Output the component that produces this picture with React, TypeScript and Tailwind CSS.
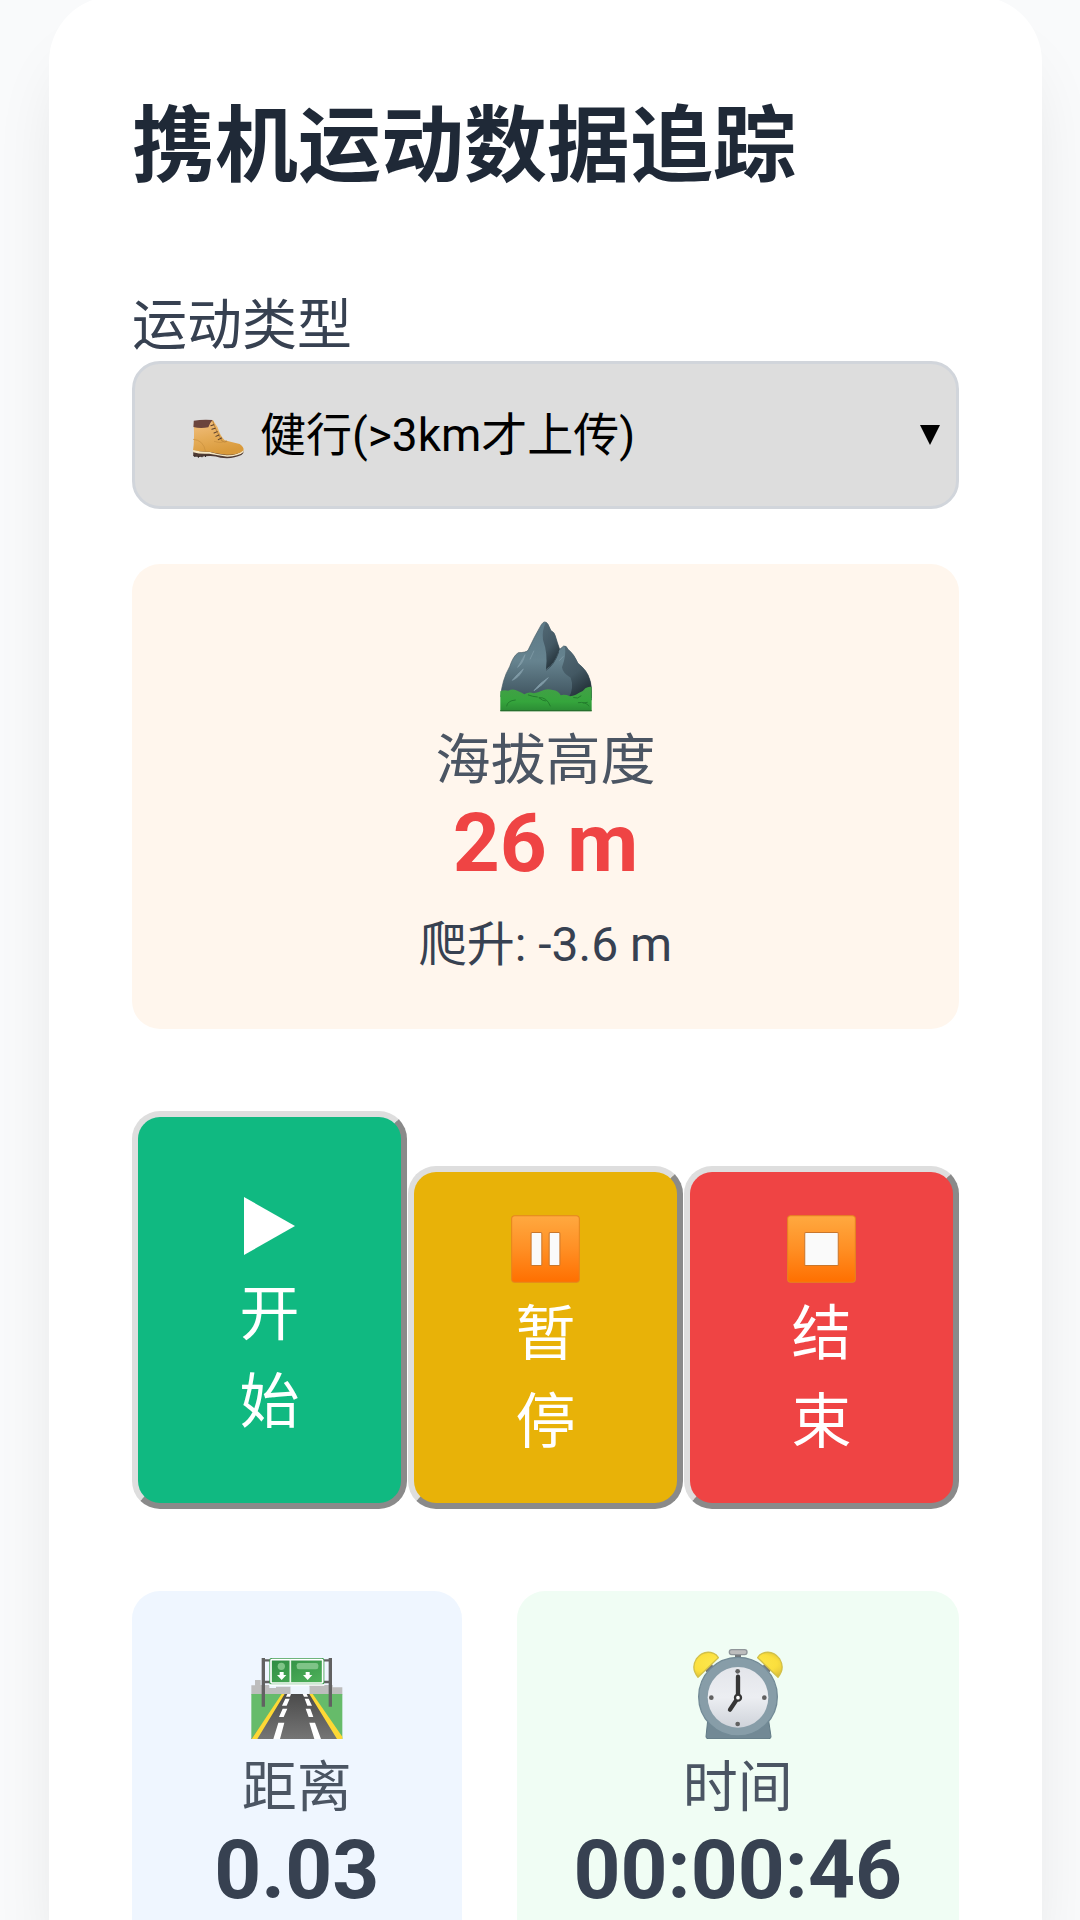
import { useState, type ReactNode } from 'react';

function Boot() {
  return (
    <svg viewBox="204 243 149 120" preserveAspectRatio="none" className="h-10 w-[53px]" aria-hidden="true">
      <defs>
        <linearGradient id="boot-leather" x1="0" y1="0" x2="0.3" y2="1">
          <stop offset="0" stopColor="#f3c184" />
          <stop offset="0.55" stopColor="#e5ac58" />
          <stop offset="1" stopColor="#d99a3b" />
        </linearGradient>
      </defs>
      <path d="M207 338 Q208 350 207 354 Q222 360 240 355 Q268 352 284 359 Q318 364 343 351 Q351 345 349 337 Z" fill="#4e3a34" />
      <path d="M207 335 Q228 342 252 341 Q276 349 302 352 Q335 352 350 333 L349 342 Q335 355 303 356 Q276 352 252 347 Q228 349 207 343 Z" fill="#f6e7c4" />
      <path d="M209 260 L262 246 Q268 254 276 268 Q283 294 296 307 Q320 314 338 318 Q350 326 349 337 Q332 353 300 350 Q274 347 252 341 Q228 342 207 336 Q211 310 209 260 Z" fill="url(#boot-leather)" />
      <path d="M209 248 Q232 244 262 246 Q254 254 250 268 Q226 272 208 267 Z" fill="#6b443c" />
      <path d="M262 248 Q270 276 288 308 Q294 315 302 309" fill="none" stroke="#c08a3e" strokeWidth="3" />
      <path d="M207 304 Q236 306 242 340 M266 310 Q280 315 290 313" fill="none" stroke="#c88f3d" strokeWidth="2" />
      <g stroke="#5b4030" strokeWidth="3" strokeLinecap="round">
        <path d="M257 263l8-3M260 274l9-3M266 285l9-4M271 295l9-4M278 305l9-5" />
      </g>
      <path d="M212 357v-5M222 359v-5M232 358v-5M242 357v-5" stroke="#2f2624" strokeWidth="3" />
    </svg>
  );
}

function Mountain() {
  return (
    <svg viewBox="300 54 276 282" className="h-[94px] w-[92px]" aria-hidden="true">
      <defs>
        <linearGradient id="rock" x1="0" y1="0" x2="0" y2="1">
          <stop offset="0" stopColor="#5d7a87" />
          <stop offset="0.5" stopColor="#66838f" />
          <stop offset="1" stopColor="#3d515c" />
        </linearGradient>
        <linearGradient id="rock-shade" x1="0" y1="0" x2="0.4" y2="1">
          <stop offset="0" stopColor="#536a76" />
          <stop offset="0.6" stopColor="#435863" />
          <stop offset="1" stopColor="#26343c" />
        </linearGradient>
        <linearGradient id="bush" x1="0" y1="0" x2="0" y2="1">
          <stop offset="0" stopColor="#43a047" />
          <stop offset="0.6" stopColor="#35a53c" />
          <stop offset="1" stopColor="#2b8a34" />
        </linearGradient>
      </defs>
      <path d="M302 290 Q306 240 329 200 Q340 167 355 158 Q378 158 384 151 Q403 110 424 74 Q434 58 444 73 L453 92 Q464 97 466 108 Q472 128 479 148 L491 138 Q499 136 504 148 Q522 162 534 190 Q562 212 569 238 Q575 252 575 300 Z" fill="url(#rock)" stroke="#465a63" strokeWidth="2" />
      <path d="M438 66 Q425 91 429 120 Q444 160 438 208 Q464 192 476 155 L479 148 Q472 128 466 108 Q464 97 453 92 L444 73 Z" fill="url(#rock-shade)" />
      <path d="M494 138 Q500 165 486 202 Q488 220 512 233 Q523 262 506 294 L575 294 Q576 255 569 238 Q562 212 534 190 Q522 162 504 148 Q499 137 494 138 Z" fill="url(#rock-shade)" />
      <path d="M476 156 Q462 196 438 211" fill="none" stroke="#3c505a" strokeWidth="3" />
      <path d="M375 164 Q369 190 353 202 Q360 190 375 164 Z M402 152 L390 178 M370 207 Q358 232 337 241 Q350 224 370 207 Z M445 233 Q430 254 402 272 Q420 248 445 233 Z M490 169 L478 182" fill="#7f9aa6" stroke="#7f9aa6" strokeWidth="2.5" strokeLinejoin="round" />
      <path d="M301 334 V274 Q312 268 325 272 Q340 264 355 274 Q366 279 373 283 Q387 274 401 280 Q416 277 424 273 Q440 264 458 270 Q476 272 482 286 Q494 282 510 289 Q528 286 536 279 Q550 275 556 265 Q565 259 575 261 V334 Z" fill="url(#bush)" />
      <path d="M301 332 H575" stroke="#27692d" strokeWidth="3" />
      <path d="M320 318 Q322 302 346 300 M385 285 Q398 290 412 291 M417 293 Q440 290 451 318 M418 294 Q428 303 437 303 M521 293 Q534 298 543 288 M535 308 Q556 304 567 318 M550 309 L562 307" fill="none" stroke="#237d2d" strokeWidth="3" strokeLinecap="round" />
    </svg>
  );
}

function Motorway() {
  return (
    <svg viewBox="395 225 276 282" className="h-[94px] w-[92px]" aria-hidden="true">
      <defs>
        <linearGradient id="asphalt" x1="0" y1="0" x2="0" y2="1">
          <stop offset="0" stopColor="#4b4b4b" />
          <stop offset="1" stopColor="#757575" />
        </linearGradient>
        <linearGradient id="sign" x1="0" y1="0" x2="1" y2="1">
          <stop offset="0" stopColor="#2e8b41" />
          <stop offset="1" stopColor="#4fb25b" />
        </linearGradient>
      </defs>
      <path d="M396 374 V346 H407 V330 H424 V345 H450 V354 H470 V350 H514 V374 Z M570 374 V345 H640 V352 H669 V374 Z" fill="#bdbdbd" />
      <path d="M396 372 H669 V507 H396 Z" fill="#66bb6a" />
      <path d="M514 350 H570 V374 H514 Z" fill="#eef5fd" />
      <path d="M492 372 H574 L669 507 H396 Z" fill="url(#asphalt)" />
      <path d="M487 372 H496 L414 507 H397 Z M570 372 H580 L669 500 V507 H653 Z" fill="#fdd835" />
      <g fill="#fff">
        <path d="M504 372h11l-3 8h-12zM498 386h13l-9 21h-14zM490 416h14l-11 25h-14zM477 458h18l-13 49h-20z" />
        <path d="M550 372h12l4 8h-12zM556 386h12l10 21h-14zM559 416h14l9 25h-14zM570 458h17l18 49h-20z" />
      </g>
      <path d="M432 264 V410 M633 264 V410" stroke="#616161" strokeWidth="10" />
      <path d="M436 271 H454 M436 336 H454 M611 271 H629 M611 336 H629" stroke="#616161" strokeWidth="7" />
      <rect x="450" y="264" width="165" height="80" rx="6" fill="#3f9c50" />
      <rect x="455" y="269" width="155" height="70" rx="3" fill="url(#sign)" stroke="#fff" strokeWidth="5" />
      <path d="M513 269 V339" stroke="#e8f5e9" strokeWidth="5" />
      <circle cx="486" cy="289" r="11" fill="#7fc487" />
      <rect x="532" y="279" width="65" height="19" rx="7" fill="#7fc487" />
      <path d="M481 306h12v9h8l-14 15l-14-15h8zM559 306h12v9h8l-14 15l-14-15h8z" fill="#fff" />
      <path d="M450 345 H615" stroke="#fff" strokeWidth="4" />
    </svg>
  );
}

function AlarmClock() {
  return (
    <svg viewBox="577 225 276 282" className="h-[94px] w-[92px]" aria-hidden="true">
      <defs>
        <linearGradient id="dial" x1="0" y1="0" x2="0" y2="1">
          <stop offset="0" stopColor="#e3e5ea" />
          <stop offset="0.5" stopColor="#eceef2" />
          <stop offset="1" stopColor="#cfd3da" />
        </linearGradient>
        <radialGradient id="bell" cx="0.45" cy="0.45" r="0.7">
          <stop offset="0" stopColor="#ffee58" />
          <stop offset="0.7" stopColor="#fbdf3d" />
          <stop offset="1" stopColor="#d9be3a" />
        </radialGradient>
      </defs>
      <path d="M617 301 L640 288 M813 301 L790 288" stroke="#757575" strokeWidth="13" />
      <path d="M624 452 L619 500 Q619 506 625 506 H808 Q814 506 814 500 L807 452 Z" fill="#728995" stroke="#607985" strokeWidth="3" />
      <rect x="706" y="248" width="18" height="24" fill="#707579" />
      <rect x="689" y="239" width="53" height="15" rx="7" fill="#bdbdbd" stroke="#8f9599" strokeWidth="4" />
      <circle cx="715" cy="380" r="118" fill="#879da8" stroke="#728a96" strokeWidth="4" />
      <circle cx="715" cy="382" r="91" fill="url(#dial)" />
      <path d="M595 322 Q573 295 590 267 Q611 239 642 250 Q651 253 656 263 Z M835 322 Q857 295 840 267 Q819 239 788 250 Q779 253 774 263 Z" fill="url(#bell)" stroke="#d2c04a" strokeWidth="4" strokeLinejoin="round" />
      <g fill="#616161">
        <circle cx="714" cy="304" r="7" />
        <circle cx="635" cy="383" r="7" />
        <circle cx="794" cy="383" r="7" />
        <circle cx="714" cy="462" r="7" />
      </g>
      <path d="M715 320 V383 L691 419" fill="none" stroke="#363636" strokeWidth="13" strokeLinecap="round" strokeLinejoin="round" />
      <circle cx="715" cy="383" r="9" fill="#fff" stroke="#363636" strokeWidth="7" />
    </svg>
  );
}

function MediaTile({ id, children }: { id: string; children: ReactNode }) {
  return (
    <svg viewBox="364 197 206 203" className="h-[68px] w-[69px]" aria-hidden="true">
      <defs>
        <linearGradient id={id} x1="0" y1="0" x2="0" y2="1">
          <stop offset="0" stopColor="#ffa940" />
          <stop offset="0.5" stopColor="#ff8f24" />
          <stop offset="1" stopColor="#ff6f00" />
        </linearGradient>
      </defs>
      <rect x="366" y="199" width="202" height="199" rx="9" fill={`url(#${id})`} stroke="#e5851f" strokeWidth="3" />
      <g fill="#fafafa" stroke="#c9762b" strokeWidth="3">
        {children}
      </g>
    </svg>
  );
}

function Stat({ icon, label, value, tone, className, children }: {
  icon: ReactNode; label: string; value: string; tone: string; className: string; children?: ReactNode;
}) {
  return (
    <section className={`flex flex-col items-center rounded-[28px] px-[57px] pt-[54px] text-center ${className}`}>
      {icon}
      <h2 className="mt-3 text-[55px] leading-[72px] text-[#4b5563]">{label}</h2>
      <p className={`text-[82px] leading-[94px] font-bold whitespace-nowrap ${tone}`}>{value}</p>
      {children}
    </section>
  );
}

const actionBase =
  'flex flex-col items-center rounded-[28px] border-[6px] border-t-[#dedede] border-l-[#dedede] border-r-[#8a8a8a] border-b-[#8a8a8a] text-[60px] leading-[88px] text-white';

function Vertical({ text }: { text: string }) {
  return <span className="block w-[60px] break-all">{text}</span>;
}

export default function App() {
  const [sport, setSport] = useState('hike');

  return (
    <div className="flex min-h-screen flex-col overflow-hidden bg-[#f9fafb] font-['Roboto','Noto_Sans_CJK_SC',sans-serif]" lang="zh-CN">
      <main className="-mt-1 mr-[38px] ml-[49px] flex grow flex-col rounded-t-[66px] bg-white px-[83px] pt-[96px] shadow-[0_55px_69px_-14px_rgba(0,0,0,0.1)]">
        <h1 className="text-[83px] leading-[110px] font-bold text-[#1f2937]">携机运动数据追踪</h1>

        <label htmlFor="sport" className="mt-[87px] text-[55px] leading-[72px] text-[#374151]">运动类型</label>
        <div className="relative">
          <select
            id="sport"
            value={sport}
            onChange={(e) => setSport(e.target.value)}
            className="h-[148px] w-full appearance-none rounded-[28px] border-[3px] border-[#d1d5db] bg-[#dddddd] pr-20 pl-[125px] text-[46px] text-black"
          >
            <option value="hike">健行(&gt;3km才上传)</option>
          </select>
          <span className="pointer-events-none absolute inset-y-0 left-[60px] flex items-center pt-2">
            <Boot />
          </span>
          <span className="pointer-events-none absolute inset-y-0 right-[19px] flex items-center">
            <svg viewBox="0 0 20 20" className="size-5" aria-hidden="true">
              <path d="M0 0H20L10 20Z" />
            </svg>
          </span>
        </div>

        <Stat icon={<Mountain />} label="海拔高度" value="26 m" tone="text-[#ef4444]" className="mt-[55px] bg-[#fff6ed] pb-[52px]">
          <p className="mt-[23px] text-[48px] leading-[64px] text-[#374151]">爬升: -3.6 m</p>
        </Stat>

        <div className="mt-[82px] grid grid-cols-3 items-end gap-px">
          <button type="button" className={`${actionBase} bg-[#10b981] pt-[64px] pb-[56px]`}>
            <span className="flex h-[90px] items-center">
              <svg viewBox="0 0 51 58" className="h-[58px] w-[51px]" fill="currentColor" aria-hidden="true">
                <path d="M0 0L51 29L0 58Z" />
              </svg>
            </span>
            <Vertical text="开始" />
          </button>
          <button type="button" className={`${actionBase} bg-[#e8b208] pt-[35px] pb-[36px]`}>
            <span className="flex h-[84px] items-center">
              <MediaTile id="tile-pause">
                <rect x="424" y="249" width="32" height="99" rx="3" />
                <rect x="478" y="249" width="32" height="99" rx="3" />
              </MediaTile>
            </span>
            <Vertical text="暂停" />
          </button>
          <button type="button" className={`${actionBase} bg-[#ef4444] pt-[35px] pb-[36px]`}>
            <span className="flex h-[84px] items-center">
              <MediaTile id="tile-stop">
                <rect x="417" y="249" width="100" height="99" rx="3" />
              </MediaTile>
            </span>
            <Vertical text="结束" />
          </button>
        </div>

        <div className="mt-[82px] grid grow grid-cols-[1fr_auto] gap-[55px]">
          <Stat icon={<Motorway />} label="距离" value="0.03" tone="text-[#374151]" className="rounded-b-none bg-[#eff6ff]" />
          <Stat icon={<AlarmClock />} label="时间" value="00:00:46" tone="text-[#374151]" className="rounded-b-none bg-[#f0fdf4]" />
        </div>
      </main>
    </div>
  );
}
